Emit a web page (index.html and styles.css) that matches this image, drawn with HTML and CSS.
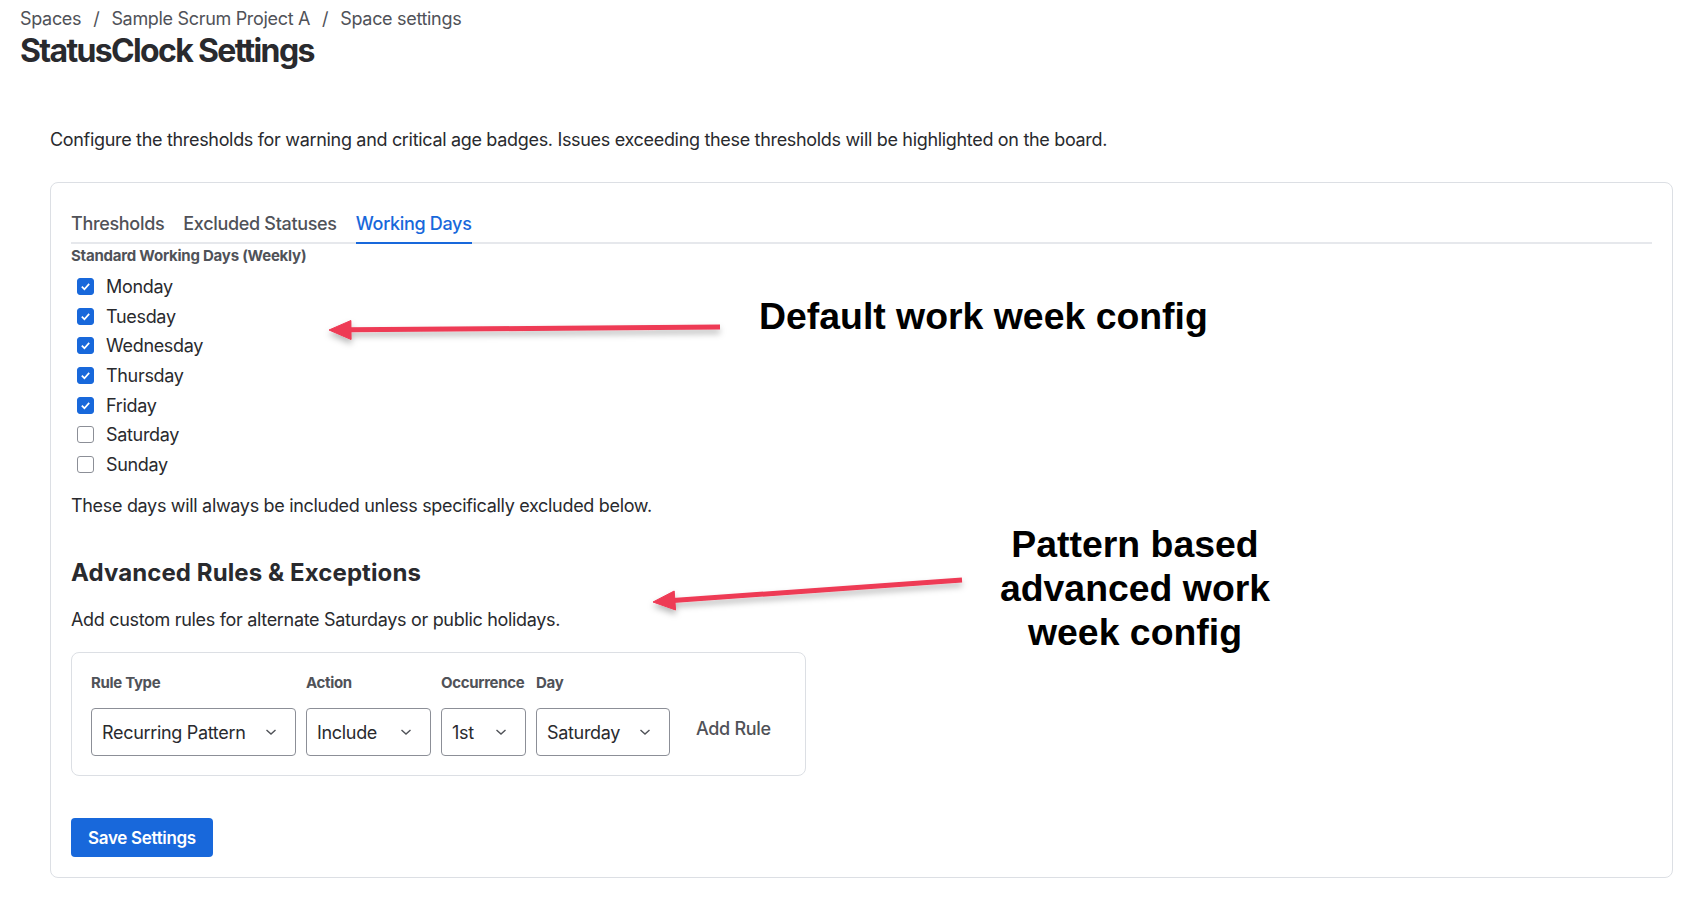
FILE: index.html
```html
<!DOCTYPE html>
<html lang="en">
<head>
    <meta charset="UTF-8">
    <meta name="viewport" content="width=device-width, initial-scale=1.0">
    <title>StatusClock Settings</title>
    <link rel="stylesheet" href="styles.css">
</head>
<body>
    <div class="page">
        <nav class="breadcrumbs">
            <span>Spaces</span><span class="sep">/</span><span>Sample Scrum Project A</span><span class="sep">/</span><span>Space settings</span>
        </nav>
        <h1>StatusClock Settings</h1>

        <main class="content">
            <p class="intro">Configure the thresholds for warning and critical age badges. Issues exceeding these thresholds will be highlighted on the board.</p>

            <section class="card">
                <div class="tabs">
                    <div class="tab">Thresholds</div>
                    <div class="tab">Excluded Statuses</div>
                    <div class="tab active">Working Days</div>
                </div>

                <div class="field-label">Standard Working Days (Weekly)</div>
                <ul class="days">
                    <li class="day"><span class="box checked"><svg viewBox="0 0 12 12"><path d="M2.6 6.2 L5 8.5 L9.4 3.6"/></svg></span>Monday</li>
                    <li class="day"><span class="box checked"><svg viewBox="0 0 12 12"><path d="M2.6 6.2 L5 8.5 L9.4 3.6"/></svg></span>Tuesday</li>
                    <li class="day"><span class="box checked"><svg viewBox="0 0 12 12"><path d="M2.6 6.2 L5 8.5 L9.4 3.6"/></svg></span>Wednesday</li>
                    <li class="day"><span class="box checked"><svg viewBox="0 0 12 12"><path d="M2.6 6.2 L5 8.5 L9.4 3.6"/></svg></span>Thursday</li>
                    <li class="day"><span class="box checked"><svg viewBox="0 0 12 12"><path d="M2.6 6.2 L5 8.5 L9.4 3.6"/></svg></span>Friday</li>
                    <li class="day"><span class="box"></span>Saturday</li>
                    <li class="day"><span class="box"></span>Sunday</li>
                </ul>
                <p class="hint">These days will always be included unless specifically excluded below.</p>

                <h2>Advanced Rules &amp; Exceptions</h2>
                <p class="sub">Add custom rules for alternate Saturdays or public holidays.</p>

                <div class="rule-box">
                    <div class="rule-field w-type">
                        <div class="rule-label">Rule Type</div>
                        <div class="select"><span>Recurring Pattern</span><svg viewBox="0 0 12 8"><path d="M1.5 2 L6 6 L10.5 2"/></svg></div>
                    </div>
                    <div class="rule-field w-action">
                        <div class="rule-label">Action</div>
                        <div class="select"><span>Include</span><svg viewBox="0 0 12 8"><path d="M1.5 2 L6 6 L10.5 2"/></svg></div>
                    </div>
                    <div class="rule-field w-occ">
                        <div class="rule-label">Occurrence</div>
                        <div class="select"><span>1st</span><svg viewBox="0 0 12 8"><path d="M1.5 2 L6 6 L10.5 2"/></svg></div>
                    </div>
                    <div class="rule-field w-day">
                        <div class="rule-label">Day</div>
                        <div class="select"><span>Saturday</span><svg viewBox="0 0 12 8"><path d="M1.5 2 L6 6 L10.5 2"/></svg></div>
                    </div>
                    <button class="add-rule">Add Rule</button>
                </div>

                <button class="save">Save Settings</button>
            </section>
        </main>
    </div>

    <!-- annotation layer drawn over the screenshot -->
    <svg class="arrows" width="1696" height="900" viewBox="0 0 1696 900">
        <defs>
            <filter id="shadow" x="-10%" y="-200%" width="120%" height="500%">
                <feDropShadow dx="0" dy="4" stdDeviation="3" flood-color="#000" flood-opacity="0.28"/>
            </filter>
        </defs>
        <g filter="url(#shadow)" fill="#ee3a55" stroke="#ee3a55">
            <line x1="720" y1="327" x2="349" y2="329.8" stroke-width="5"/>
            <polygon points="329,330 351.1,339.5 350.9,320.5" stroke-width="1"/>
            <line x1="962" y1="580" x2="673" y2="600.5" stroke-width="5"/>
            <polygon points="653,602 675.6,610 674.2,591" stroke-width="1"/>
        </g>
    </svg>
    <div class="note note-default">Default work week config</div>
    <div class="note note-pattern">Pattern based<br>advanced work<br>week config</div>
</body>
</html>
```

FILE: styles.css
```css
body {
    margin: 0;
    font-family: Inter, "Noto Sans", sans-serif;
    color: #292a2e;
    background-color: #ffffff;
    letter-spacing: -0.02em;
}
.page {
    padding-top: 7px;
}
.breadcrumbs {
    padding-left: 20px;
    font-size: 18px;
    line-height: 24px;
    color: #505258;
}
.breadcrumbs .sep {
    margin: 0 12px;
}
h1 {
    margin: 0;
    padding-left: 20px;
    font-size: 32px;
    line-height: 40px;
    font-weight: 700;
    letter-spacing: -0.052em;
}
.content {
    padding: 0 23px 0 50px;
}
.intro {
    margin: 57px 0 0;
    font-size: 18px;
    line-height: 24px;
}
.card {
    margin-top: 30px;
    border: 1px solid #dcdfe4;
    border-radius: 8px;
    padding: 20px;
}
.tabs {
    display: flex;
    gap: 19px;
    box-shadow: inset 0 -2px 0 #e6e8ec;
}
.tab {
    padding: 9px 0 6px;
    font-size: 18px;
    line-height: 24px;
    font-weight: 500;
    color: #505258;
    border-bottom: 2px solid transparent;
}
.tab.active {
    color: #1868db;
    border-bottom-color: #1868db;
}
.field-label {
    margin-top: 2px;
    font-size: 15px;
    line-height: 20px;
    font-weight: 700;
    color: #505258;
    letter-spacing: -0.015em;
}
.days {
    list-style: none;
    margin: 6px 0 0;
    padding: 0;
}
.day {
    display: flex;
    align-items: center;
    height: 29.6px;
    font-size: 18px;
}
.box {
    width: 15px;
    height: 15px;
    margin: 0 12px 0 6px;
    border: 1px solid #8c8f97;
    border-radius: 3px;
    display: flex;
    align-items: center;
    justify-content: center;
}
.box.checked {
    background-color: #1868db;
    border-color: #1868db;
}
.box svg {
    width: 13px;
    height: 13px;
    fill: none;
    stroke: #ffffff;
    stroke-width: 1.6;
}
.hint {
    margin: 15px 0 0;
    font-size: 18px;
    line-height: 24px;
}
h2 {
    margin: 39px 0 0;
    font-size: 24px;
    line-height: 32px;
    font-weight: 650;
    letter-spacing: 0.004em;
}
.sub {
    margin: 19px 0 0;
    font-size: 18px;
    line-height: 24px;
}
.rule-box {
    margin-top: 20px;
    width: 695px;
    border: 1px solid #dcdfe4;
    border-radius: 8px;
    padding: 20px 19px 19px;
    display: flex;
    gap: 10px;
    align-items: flex-end;
}
.rule-label {
    font-size: 15px;
    line-height: 20px;
    font-weight: 700;
    color: #505258;
    margin-bottom: 15px;
}
.w-type { width: 205px; }
.w-action { width: 125px; }
.w-occ { width: 85px; }
.w-day { width: 134px; }
.select {
    box-sizing: border-box;
    height: 48px;
    border: 1px solid #8c8f97;
    border-radius: 4px;
    padding: 0 18px 0 10px;
    display: flex;
    align-items: center;
    justify-content: space-between;
    font-size: 18px;
}
.select svg {
    width: 12px;
    height: 8px;
    fill: none;
    stroke: #505258;
    stroke-width: 1.4;
}
.add-rule {
    flex-shrink: 0;
    white-space: nowrap;
    margin-bottom: 8px;
    height: 40px;
    padding: 0 0 0 16px;
    background: none;
    border: none;
    font-family: inherit;
    letter-spacing: inherit;
    font-size: 18px;
    font-weight: 500;
    color: #505258;
}
.save {
    margin-top: 42px;
    width: 142px;
    height: 39px;
    background-color: #1868db;
    color: #ffffff;
    border: none;
    border-radius: 4px;
    font-family: inherit;
    letter-spacing: inherit;
    font-size: 17px;
    font-weight: 600;
}
.arrows {
    position: absolute;
    top: 0;
    left: 0;
    pointer-events: none;
}
.note {
    position: absolute;
    font-family: "Liberation Sans", Arial, sans-serif;
    font-weight: 700;
    font-size: 37.4px;
    line-height: 44px;
    letter-spacing: 0;
    color: #000000;
}
.note-default {
    left: 759px;
    top: 294px;
}
.note-pattern {
    left: 985px;
    top: 522px;
    width: 300px;
    text-align: center;
}
```
